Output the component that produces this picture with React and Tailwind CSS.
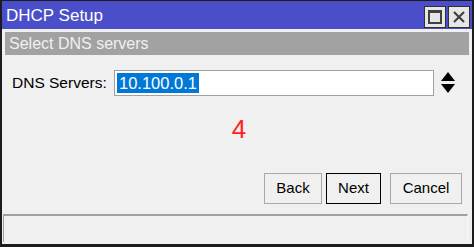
export default function App() {
  return (
    <div className="w-[474px] h-[247px] bg-[#f0f0f0] border-x-2 border-t border-b-[3px] border-[#1c1c1c] flex flex-col font-['Liberation_Sans',Arial,sans-serif]">
      {/* title bar */}
      <div className="h-[28px] bg-[#4a4fc9] flex items-center justify-between pl-[4px] pr-[2px]">
        <span className="text-white text-[17px] leading-none">DHCP Setup</span>
        <div className="flex gap-[2px] mt-[4px]">
          <button className="w-[22px] h-[22px] bg-[#e6e6e6] border border-[#303030] flex items-center justify-center">
            <span className="w-[14px] h-[14px] border-2 border-[#404040] border-t-[3px] bg-[#e6e6e6]" />
          </button>
          <button className="w-[22px] h-[22px] bg-[#e6e6e6] border border-[#303030] flex items-center justify-center">
            <svg width="12" height="12" viewBox="0 0 12 12">
              <path d="M1 1 L11 11 M11 1 L1 11" stroke="#404040" strokeWidth="2.2" />
            </svg>
          </button>
        </div>
      </div>

      {/* section header */}
      <div className="mt-[3px] mx-[3px] h-[23px] bg-[#a2a2a2] flex items-center pl-[4px]">
        <span className="text-[#f0f0f0] text-[16px] leading-none">Select DNS servers</span>
      </div>

      {/* form row */}
      <div className="mt-[15px] flex items-center pl-[10px]">
        <span className="text-[15.5px] text-black w-[102px]">DNS Servers:</span>
        <div className="w-[320px] h-[26px] bg-white border border-[#a0a0a0] flex items-center pl-[2px]">
          <span className="bg-[#0078d7] text-white text-[16.5px] leading-[20px] px-[2px]">10.100.0.1</span>
        </div>
        <svg className="ml-[6px]" width="16" height="24" viewBox="0 0 16 24">
          <path d="M8 1 L15 10 L1 10 Z" fill="#000" />
          <path d="M1 13 L15 13 L8 22 Z" fill="#000" />
        </svg>
      </div>

      {/* step number */}
      <div className="mt-[20px] flex justify-center pl-[4px]">
        <span className="text-[#ff1f1f] text-[26px] leading-none">4</span>
      </div>

      {/* buttons */}
      <div className="mt-[31px] flex justify-end pr-[10px]">
        <button className="w-[58px] h-[31px] bg-[#f0f0f0] border border-[#a8a8a8] text-[15px] text-black">Back</button>
        <button className="ml-[4px] w-[55px] h-[31px] bg-[#f0f0f0] border border-black text-[15px] text-black">Next</button>
        <button className="ml-[9px] w-[72px] h-[31px] bg-[#f0f0f0] border border-[#a8a8a8] text-[15px] text-black">Cancel</button>
      </div>

      {/* status bar */}
      <div className="mt-auto mb-[2px] ml-[1px] mr-[4px] h-[28px] border-t-2 border-l border-[#a0a0a0] border-r border-r-[#f8f8f8]" />
    </div>
  );
}
